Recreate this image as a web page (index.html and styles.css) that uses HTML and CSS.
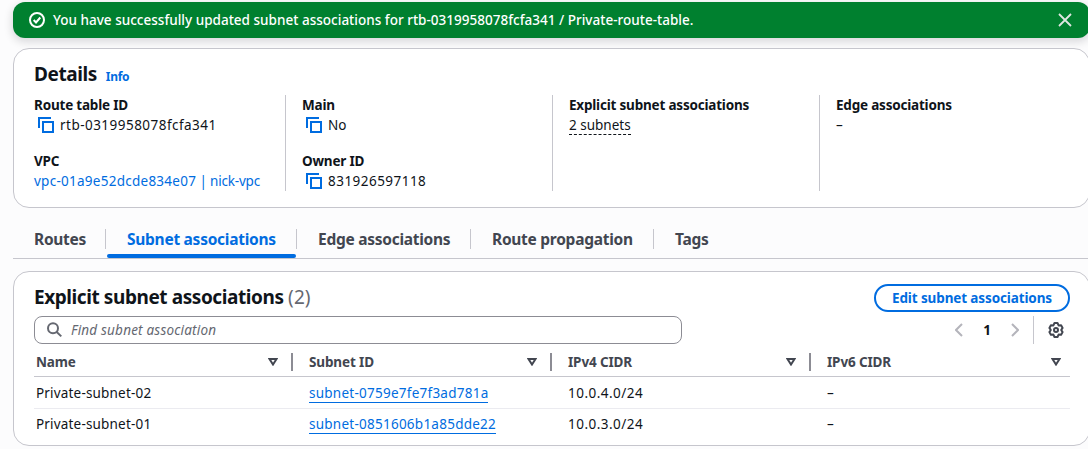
FILE: index.html
```html
<!DOCTYPE html>
<html lang="en">
<head>
<meta charset="utf-8">
<title>Route table</title>
<link rel="stylesheet" href="styles.css">
</head>
<body>
<svg class="defs" width="0" height="0">
  <symbol id="copy" viewBox="0 0 16 16"><path d="M1 11V1h12M5 5h10v10H5z"/></symbol>
  <symbol id="sort" viewBox="0 0 10 8"><path d="M1.5 1h7L5 6.500z"/></symbol>
</svg>
<main class="page">
  <div class="flash">
    <svg class="flash-icon" viewBox="0 0 16 16"><circle cx="8" cy="8" r="7"/><path d="M4.700 8l2.300 2.500 4.300-5"/></svg>
    <span class="flash-text">You have successfully updated subnet associations for rtb-0319958078fcfa341 / Private-route-table.</span>
    <svg class="close" viewBox="0 0 14 14"><path d="M1 1l12 12M13 1L1 13"/></svg>
  </div>

  <section class="card details">
    <header class="details-head"><h2 class="title">Details</h2><a class="info">Info</a></header>
    <div class="cols">
      <div class="col">
        <div class="pair"><div class="label">Route table ID</div><div class="value"><svg class="copy"><use href="#copy"/></svg><span class="digits">rtb-0319958078fcfa341</span></div></div>
        <div class="pair"><div class="label">VPC</div><div class="value"><a class="link"><span class="vpc-id">vpc-01a9e52dcde834e07</span><span class="vpc-name"> | nick-vpc</span></a></div></div>
      </div>
      <div class="col">
        <div class="pair"><div class="label">Main</div><div class="value"><svg class="copy"><use href="#copy"/></svg><span>No</span></div></div>
        <div class="pair"><div class="label">Owner ID</div><div class="value"><svg class="copy"><use href="#copy"/></svg><span class="digits">831926597118</span></div></div>
      </div>
      <div class="col">
        <div class="pair"><div class="label">Explicit subnet associations</div><div class="value"><span class="dashed">2 subnets</span></div></div>
      </div>
      <div class="col">
        <div class="pair"><div class="label">Edge associations</div><div class="value">–</div></div>
      </div>
    </div>
  </section>

  <nav class="tabs">
    <a class="tab t1"><span>Routes</span></a>
    <a class="tab t2 active"><span>Subnet associations</span></a>
    <a class="tab t3"><span>Edge associations</span></a>
    <a class="tab t4"><span>Route propagation</span></a>
    <a class="tab t5"><span>Tags</span></a>
  </nav>

  <section class="card assoc">
    <header class="assoc-head">
      <h2 class="title"><span>Explicit subnet associations</span> <span class="count">(2)</span></h2>
      <button class="edit"><span>Edit subnet associations</span></button>
    </header>
    <div class="tools">
      <div class="search">
        <svg class="glass" viewBox="0 0 16 16"><circle cx="6" cy="6.300" r="5"/><path d="M9.700 10l4.600 4.400"/></svg>
        <span class="placeholder">Find subnet association</span>
      </div>
      <div class="pager">
        <svg class="chev" viewBox="0 0 8 14"><path d="M7 1L1 7l6 6"/></svg>
        <span class="page-no">1</span>
        <svg class="chev" viewBox="0 0 8 14"><path d="M1 1l6 6-6 6"/></svg>
        <span class="rule"></span>
        <svg class="gear" viewBox="0 0 16 16"><path d="M6.500 1h3l1.100 2.400 2.500-.200 1.500 2.700L13.200 8l1.400 2.100-1.500 2.700-2.500-.200L9.500 15h-3l-1.100-2.400-2.500.200-1.500-2.700L2.800 8 1.400 5.900l1.500-2.700 2.500.200z"/><circle cx="8" cy="8" r="2"/></svg>
      </div>
    </div>
    <div class="table">
      <div class="row head">
        <div class="cell"><span>Name</span><svg class="sort"><use href="#sort"/></svg></div>
        <div class="cell"><span>Subnet ID</span><svg class="sort"><use href="#sort"/></svg></div>
        <div class="cell"><span>IPv4 CIDR</span><svg class="sort"><use href="#sort"/></svg></div>
        <div class="cell"><span>IPv6 CIDR</span><svg class="sort"><use href="#sort"/></svg></div>
      </div>
      <div class="row">
        <div class="cell"><span class="name">Private-subnet-02</span></div>
        <div class="cell"><a class="link under">subnet-0759e7fe7f3ad781a</a></div>
        <div class="cell"><span class="digits">10.0.4.0/24</span></div>
        <div class="cell">–</div>
      </div>
      <div class="row">
        <div class="cell"><span class="name">Private-subnet-01</span></div>
        <div class="cell"><a class="link under">subnet-0851606b1a85dde22</a></div>
        <div class="cell"><span class="digits">10.0.3.0/24</span></div>
        <div class="cell">–</div>
      </div>
    </div>
  </section>
</main>
</body>
</html>
```
FILE: styles.css
```css
* { box-sizing: border-box; }
html, body { margin: 0; overflow: hidden; }
body {
  width: 1088px; height: 449px;
  background: #fcfcfd; color: #0f141a;
  font: 13.5px/20px "Noto Sans", "Open Sans", sans-serif;
  white-space: nowrap;
}
svg { display: block; flex: none; fill: none; stroke: currentColor; stroke-width: 2; }
.defs { position: absolute; }
.page { width: 1090px; padding: 2px 0 0 13px; display: flex; flex-direction: column; }

.flash {
  height: 36px; border-radius: 12px; background: #00802f; color: #fff;
  display: flex; align-items: center; padding: 0 18px 0 16px;
  box-shadow: 0 3px 9px 1px rgba(0, 7, 22, .14);
}
.flash-icon { width: 16px; height: 16px; margin-right: 8px; }
.flash-text { font-weight: 500; letter-spacing: .015px; }
.close { width: 14px; height: 14px; margin-left: auto; stroke-width: 1.8; color: #dfe6e2; }

.card { background: #fff; border: 1px solid #c6c6cd; border-radius: 16px; }
.details { height: 160px; margin-top: 10px; padding: 13px 0 0 20px; }
.title { margin: 0; font-size: 19px; line-height: 24px; font-weight: 700; letter-spacing: -.42px; }
.details-head { display: flex; align-items: baseline; gap: 9px; height: 33px; }
.info { color: #006ce0; font-size: 12px; font-weight: 700; letter-spacing: -.3px; }
.cols { display: grid; grid-template-columns: 251px 267px 267px 1fr; height: 96px; }
.col { display: flex; flex-direction: column; gap: 16px; }
.col + .col { border-left: 1px solid #c6c6cd; padding-left: 16px; }
.label { font-weight: 700; letter-spacing: -.2px; }
.value { display: flex; align-items: center; height: 20px; }
.copy { width: 16px; height: 16px; margin: 0 6px 0 4px; color: #006ce0; }
.link { color: #006ce0; }
.digits { letter-spacing: .47px; }
.vpc-id { letter-spacing: .26px; }
.vpc-name { letter-spacing: -.2px; }
.dashed { line-height: 17px; border-bottom: 1px dashed #0f141a; letter-spacing: 0; margin-top: 1px; }

.tabs { height: 51px; display: flex; border-bottom: 1px solid #c6c6cd; padding-top: 21px; font-size: 15.5px; font-weight: 700; letter-spacing: -.27px; color: #424650; }
.tab { height: 20px; border-right: 1px solid #c6c6cd; padding-left: 21px; position: relative; }
.t1 { width: 93px; }
.t2 { width: 191px; }
.t3 { width: 174px; }
.t4 { width: 183px; }
.t5 { border: 0; }
.active { color: #006ce0; }
.active::after { content: ""; position: absolute; left: 1px; right: 0; top: 25px; height: 4px; border-radius: 4px; background: #006ce0; }

.assoc { height: 175px; margin-top: 12px; padding: 12px 19px 0 20px; }
.assoc-head { display: flex; justify-content: space-between; height: 32px; }
.assoc-head .title { line-height: 26px; }
.count { color: #656871; font-weight: 400; letter-spacing: .1px; }
.edit { width: 196px; height: 28px; border: 2px solid #006ce0; border-radius: 14px; background: #fff; color: #006ce0; font: 700 13.5px/20px "Noto Sans", sans-serif; letter-spacing: -.12px; padding: 0; }
.tools { display: flex; justify-content: space-between; height: 28px; }
.search { width: 648px; height: 28px; border: 1px solid #8c8c94; border-radius: 8px; display: flex; align-items: center; padding-left: 12px; color: #656871; }
.glass { width: 16px; height: 16px; margin-right: 8px; }
.placeholder { font-style: italic; letter-spacing: .2px; }
.pager { display: flex; align-items: center; font-weight: 700; }
.chev { width: 8px; height: 14px; color: #b4b4bb; }
.page-no { width: 48px; text-align: center; }
.rule { width: 1px; height: 28px; background: #c6c6cd; margin: 0 14px; }
.gear { width: 16px; height: 16px; margin-right: 6px; stroke-linejoin: round; color: #424650; }

.row { display: grid; grid-template-columns: 259px 259px 259px 1fr; height: 32px; padding-top: 1px; border-bottom: 1px solid #ebebf0; }
.row:last-child { height: 30px; padding-top: 0; border: 0; }
.cell { display: flex; align-items: center; padding-left: 16px; }
.cell:first-child { padding-left: 2px; }
.name { letter-spacing: .18px; }
.head { height: 33px; padding: 0; border-color: #c6c6cd; color: #424650; font-weight: 700; letter-spacing: -.13px; }
.head .cell { height: 18px; margin-top: 9px; justify-content: space-between; padding-right: 13px; border-right: 2px solid #8c8c94; }
.head .cell:last-child { border: 0; padding-right: 9px; }
.sort { width: 10px; height: 8px; }
.under { line-height: 18px; border-bottom: 1px solid #006ce0; letter-spacing: .25px; margin-top: 1px; }
```
